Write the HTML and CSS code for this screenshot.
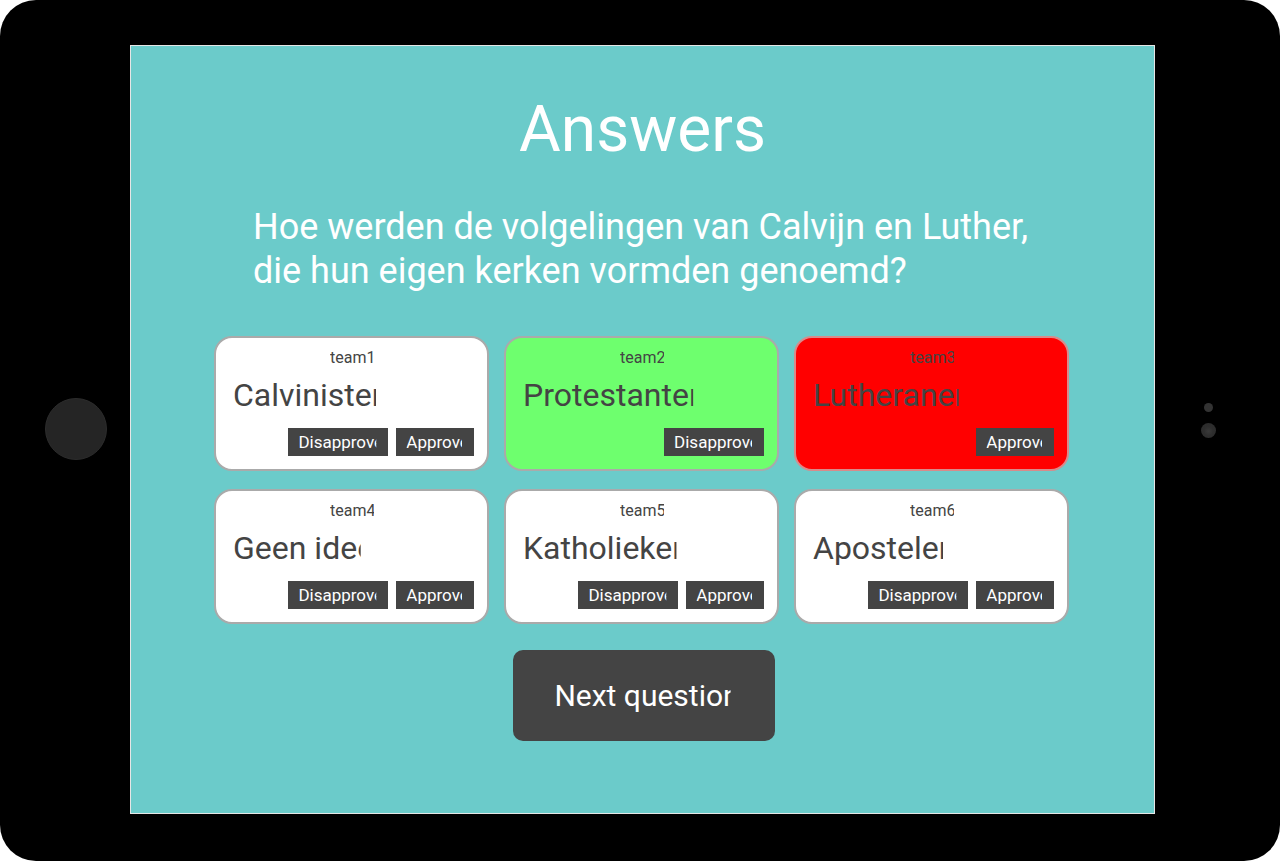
FILE: index.html
```html
<!DOCTYPE html>
<html lang="nl">
<head>
<meta charset="utf-8">
<title>Answers</title>
<link rel="stylesheet" href="styles.css">
</head>
<body>
<div class="tablet">
  <div class="side side-left">
    <div class="home-button"></div>
  </div>
  <main class="screen">
    <h1 class="title">Answers</h1>
    <p class="question">Hoe werden de volgelingen van Calvijn en Luther, die hun eigen kerken vormden genoemd?</p>
    <section class="answers">
      <article class="card">
        <div class="team"><span class="clip clip-sm">team1</span></div>
        <div class="answer"><span class="clip clip-lg">Calvinisten</span></div>
        <div class="actions">
          <button class="btn"><span class="clip">Disapprove</span></button>
          <button class="btn"><span class="clip">Approve</span></button>
        </div>
      </article>
      <article class="card card-approved">
        <div class="team"><span class="clip clip-sm">team2</span></div>
        <div class="answer"><span class="clip clip-lg">Protestanten</span></div>
        <div class="actions">
          <button class="btn"><span class="clip">Disapprove</span></button>
        </div>
      </article>
      <article class="card card-rejected">
        <div class="team"><span class="clip clip-sm">team3</span></div>
        <div class="answer"><span class="clip clip-lg">Lutheranen</span></div>
        <div class="actions">
          <button class="btn"><span class="clip">Approve</span></button>
        </div>
      </article>
      <article class="card">
        <div class="team"><span class="clip clip-sm">team4</span></div>
        <div class="answer"><span class="clip clip-lg">Geen idee</span></div>
        <div class="actions">
          <button class="btn"><span class="clip">Disapprove</span></button>
          <button class="btn"><span class="clip">Approve</span></button>
        </div>
      </article>
      <article class="card">
        <div class="team"><span class="clip clip-sm">team5</span></div>
        <div class="answer"><span class="clip clip-lg">Katholieken</span></div>
        <div class="actions">
          <button class="btn"><span class="clip">Disapprove</span></button>
          <button class="btn"><span class="clip">Approve</span></button>
        </div>
      </article>
      <article class="card">
        <div class="team"><span class="clip clip-sm">team6</span></div>
        <div class="answer"><span class="clip clip-lg">Apostelen</span></div>
        <div class="actions">
          <button class="btn"><span class="clip">Disapprove</span></button>
          <button class="btn"><span class="clip">Approve</span></button>
        </div>
      </article>
    </section>
    <button class="next"><span class="clip">Next question</span></button>
  </main>
  <div class="side side-right">
    <div class="sensors">
      <span class="sensor-small"></span>
      <span class="sensor-camera"></span>
    </div>
  </div>
</div>
</body>
</html>
```
FILE: styles.css
```css
* {
  box-sizing: border-box;
}

html, body {
  margin: 0;
  padding: 0;
  background: #ffffff;
}

body {
  font-family: Roboto, "Liberation Sans", sans-serif;
  width: 1280px;
  height: 861px;
  overflow: hidden;
}

.tablet {
  width: 1280px;
  height: 861px;
  background: #000000;
  border-radius: 36px;
  display: flex;
  align-items: flex-start;
  padding-top: 45px;
}

.side {
  height: 768px;
  display: flex;
  align-items: center;
}

.side-left {
  width: 130px;
  padding-left: 45px;
}

.home-button {
  width: 62px;
  height: 62px;
  border-radius: 50%;
  background: #252525;
  border: 1px solid #2c2c2c;
}

.side-right {
  width: 125px;
  padding-left: 46px;
}

.sensors {
  width: 15px;
  display: flex;
  flex-direction: column;
  align-items: center;
  gap: 11px;
  margin-bottom: 17px;
}

.sensor-small {
  display: block;
  width: 9px;
  height: 9px;
  border-radius: 50%;
  background: #333333;
}

.sensor-camera {
  display: block;
  width: 15px;
  height: 15px;
  border-radius: 50%;
  background: radial-gradient(circle at 50% 55%, #3a3a3a 0, #2e2e2e 40%, #2a2a2a 100%);
}

.screen {
  width: 1025px;
  height: 769px;
  background: #6bcbca;
  border: 1px solid #e6e6e6;
  display: flex;
  flex-direction: column;
  align-items: center;
}

.title {
  margin: 52px 0 0;
  font-size: 64px;
  line-height: 64px;
  font-weight: 400;
  color: #ffffff;
  text-align: center;
}

.question {
  align-self: flex-start;
  margin: 43px 0 0 122px;
  width: 790px;
  font-size: 36px;
  line-height: 44px;
  font-weight: 400;
  color: #ffffff;
}

.answers {
  margin-top: 43px;
  margin-right: 2px;
  display: grid;
  grid-template-columns: repeat(3, 275px);
  column-gap: 15px;
  row-gap: 18px;
}

.card {
  height: 135px;
  background: #ffffff;
  border: 2px solid #aaaaaa;
  border-radius: 18px;
  padding: 10px 13px 0 17px;
  color: #444444;
  display: flex;
  flex-direction: column;
}

.card-approved {
  background: #6eff6e;
}

.card-rejected {
  background: #ff0000;
  border-color: #d98a8a;
}

.team {
  font-size: 16px;
  line-height: 19px;
  text-align: center;
  padding-right: 3px;
  white-space: nowrap;
}

.answer {
  margin-top: 9px;
  font-size: 32px;
  line-height: 38px;
  white-space: nowrap;
}

.actions {
  margin-top: 14px;
  display: flex;
  justify-content: flex-end;
  gap: 8px;
}

.btn {
  height: 28px;
  border: none;
  border-radius: 0;
  background: #444444;
  color: #ffffff;
  font-family: Roboto, "Liberation Sans", sans-serif;
  font-size: 17px;
  line-height: 28px;
  padding: 0 12px 0 10px;
  white-space: nowrap;
}

.clip {
  display: inline-block;
  clip-path: inset(-4px 0.4em -4px 0);
  margin-right: -0.4em;
}

.clip-lg {
  clip-path: inset(-6px 0.42em -6px 0);
  margin-right: -0.42em;
}

.clip-sm {
  clip-path: inset(-4px 0.1em -4px 0);
  margin-right: -0.1em;
}

.next {
  margin-top: 26px;
  margin-left: 3px;
  height: 91px;
  border: none;
  border-radius: 10px;
  background: #444444;
  color: #ffffff;
  font-family: Roboto, "Liberation Sans", sans-serif;
  font-size: 30px;
  line-height: 91px;
  padding: 0 44px 0 41px;
  white-space: nowrap;
}

.next .clip {
  clip-path: inset(-6px 0.3em -6px 0);
  margin-right: -0.3em;
}
```
